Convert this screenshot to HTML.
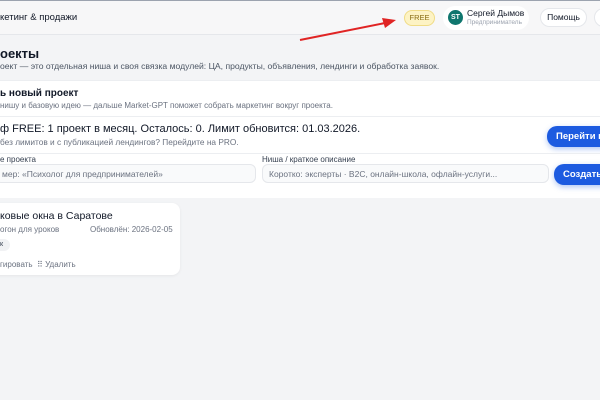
<!DOCTYPE html><html><head><meta charset="utf-8"><style>
*{box-sizing:border-box;margin:0;padding:0}
body{width:600px;height:400px;overflow:hidden;background:#f3f4f6;font-family:"Liberation Sans",sans-serif;color:#111827;position:relative}
.a{position:absolute;white-space:nowrap}
.hdr{position:absolute;left:0;top:0;width:600px;height:35px;background:#f7f7f8;border-top:1px solid #9ca3af;border-bottom:1px solid #e5e7eb}
.card{position:absolute;background:#fff}
.inp{position:absolute;height:19px;background:#f9fafb;border:1px solid #e5e7eb;border-radius:6px;font-size:8.5px;color:#6b7280;padding:4px 6px;white-space:nowrap;overflow:hidden}
.btn{position:absolute;background:#1d5be0;color:#fff;font-size:9.5px;font-weight:bold;border-radius:10px;padding:5px 9px;white-space:nowrap;box-shadow:0 2px 6px rgba(29,91,224,.35)}
</style></head><body>
<div class="hdr"></div>
<div class="a" style="left:0;top:12px;font-size:9.5px">кетинг &amp; продажи</div>
<div class="a" style="left:404px;top:10px;width:31px;height:16px;border-radius:8px;background:#fdf3c4;border:1px solid #f0dc86;font-size:7.5px;color:#8a6d14;text-align:center;line-height:14px">FREE</div>
<div class="a" style="left:443px;top:6px;width:86px;height:24px;border-radius:12px;background:#fff"></div>
<div class="a" style="left:448px;top:10px;width:15px;height:15px;border-radius:50%;background:#0f766e;color:#fff;font-size:7px;font-weight:bold;text-align:center;line-height:15px">ST</div>
<div class="a" style="left:467px;top:8px;font-size:8.5px">Сергей Дымов</div>
<div class="a" style="left:467px;top:19px;font-size:6.5px;color:#9ca3af">Предприниматель</div>
<div class="a" style="left:540px;top:8px;width:47px;height:19px;border-radius:10px;background:#fff;border:1px solid #e5e7eb;font-size:8.5px;text-align:center;line-height:17px">Помощь</div>
<div class="a" style="left:594px;top:8px;width:20px;height:19px;border-radius:10px;background:#fff;border:1px solid #e5e7eb"></div>
<svg class="a" style="left:0;top:0" width="600" height="60"><line x1="300" y1="40" x2="385" y2="23" stroke="#e02424" stroke-width="2"/><polygon points="396,20 382,18 385,28" fill="#e02424"/></svg>
<div class="a" style="left:0;top:46px;font-size:13px;font-weight:bold">оекты</div>
<div class="a" style="left:0;top:61px;font-size:8.6px;color:#4b5563">оект — это отдельная ниша и своя связка модулей: ЦА, продукты, объявления, лендинги и обработка заявок.</div>
<div class="card" style="left:0;top:80px;width:600px;height:118px;border-top:1px solid #eceef1"></div>
<div class="a" style="left:0;top:88px;font-size:10px;font-weight:bold">ь новый проект</div>
<div class="a" style="left:0;top:101px;font-size:8px;color:#6b7280">нишу и базовую идею — дальше Market-GPT поможет собрать маркетинг вокруг проекта.</div>
<div class="a" style="left:0;top:116px;width:600px;height:1px;background:#eceef1"></div>
<div class="a" style="left:0;top:123px;font-size:11px">ф FREE: 1 проект в месяц. Осталось: 0. Лимит обновится: 01.03.2026.</div>
<div class="a" style="left:0;top:137px;font-size:8.3px;color:#6b7280">без лимитов и с публикацией лендингов? Перейдите на PRO.</div>
<div class="btn" style="left:547px;top:126px;width:70px">Перейти на</div>
<div class="a" style="left:0;top:153px;width:600px;height:1px;background:#eceef1"></div>
<div class="a" style="left:0;top:155px;font-size:8px;color:#374151">е проекта</div>
<div class="a" style="left:262px;top:155px;font-size:8px;color:#374151">Ниша / краткое описание</div>
<div class="inp" style="left:-5px;top:164px;width:261px">мер: «Психолог для предпринимателей»</div>
<div class="inp" style="left:262px;top:164px;width:287px">Коротко: эксперты · B2C, онлайн-школа, офлайн-услуги...</div>
<div class="btn" style="left:554px;top:164px;width:60px">Создать</div>
<div class="card" style="left:-10px;top:203px;width:190px;height:72px;border-radius:8px;box-shadow:0 1px 3px rgba(0,0,0,.06)"></div>
<div class="a" style="left:0;top:210px;font-size:10.5px">ковые окна в Саратове</div>
<div class="a" style="left:0;top:225px;font-size:8px;color:#6b7280">огон для уроков</div>
<div class="a" style="left:90px;top:225px;font-size:8px;color:#6b7280">Обновлён: 2026-02-05</div>
<div class="a" style="left:-6px;top:239px;width:16px;height:12px;border-radius:6px;background:#f1f2f4;font-size:7px;color:#374151;padding:2px 0 0 6px">к</div>
<div class="a" style="left:0;top:260px;font-size:8px;color:#6b7280">гировать &nbsp;⠿ Удалить</div>
</body></html>
